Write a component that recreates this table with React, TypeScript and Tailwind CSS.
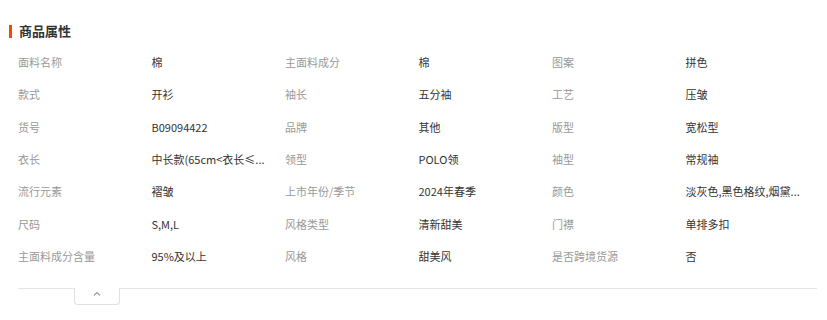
import React from "react";

const rows: [string, string, string, string, string, string][] = [
  ["面料名称", "棉", "主面料成分", "棉", "图案", "拼色"],
  ["款式", "开衫", "袖长", "五分袖", "工艺", "压皱"],
  ["货号", "B09094422", "品牌", "其他", "版型", "宽松型"],
  ["衣长", "中长款(65cm<衣长≤...", "领型", "POLO领", "袖型", "常规袖"],
  ["流行元素", "褶皱", "上市年份/季节", "2024年春季", "颜色", "淡灰色,黑色格纹,烟黛..."],
  ["尺码", "S,M,L", "风格类型", "清新甜美", "门襟", "单排多扣"],
  ["主面料成分含量", "95%及以上", "风格", "甜美风", "是否跨境货源", "否"],
];

export default function App() {
  return (
    <div
      className="w-[827px] h-[320px] bg-white overflow-hidden"
      style={{ fontFamily: '"Noto Sans CJK SC", "Noto Sans", sans-serif' }}
    >
      <div className="pt-[22px] pl-[9px] flex items-center h-[40px]">
        <div className="w-[3px] h-[13px] bg-[#ff4400]" />
        <div className="ml-[7px] text-[13px] font-bold text-[#333] leading-[18px]">商品属性</div>
      </div>
      <div className="pl-[18px] pt-[6px]">
        <div className="grid grid-cols-[133.5px_133.5px_133.5px_133.5px_133.5px_133.5px] auto-rows-[32.33px] w-[801px]">
          {rows.map((r, i) => (
            <React.Fragment key={i}>
              {r.map((c, j) => (
                <div
                  key={j}
                  className={
                    "flex items-center text-[11px] leading-[16px] whitespace-nowrap " +
                    (j % 2 === 0 ? "text-[#999]" : "text-[#333]")
                  }
                >
                  {c}
                </div>
              ))}
            </React.Fragment>
          ))}
        </div>
        <div className="mt-[16px] w-[799px] border-t border-[#e5e5e5] relative">
          <div className="absolute left-[56px] top-[-1px] w-[46px] h-[17px] bg-white border border-t-0 border-[#e0e0e0] rounded-b-[4px] flex justify-center pt-[2px]">
            <svg width="8" height="6" viewBox="0 0 8 6" className="mt-[1px]">
              <path d="M1 4.5 L4 1.5 L7 4.5" fill="none" stroke="#999" strokeWidth="1.1" />
            </svg>
          </div>
        </div>
      </div>
    </div>
  );
}
